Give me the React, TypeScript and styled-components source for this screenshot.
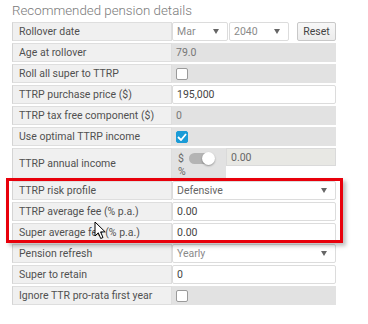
import styled, { createGlobalStyle } from "styled-components";

const Global = createGlobalStyle`
  body {
    margin: 0;
    background: #fff;
    font-family: Roboto, "Liberation Sans", Arial, sans-serif;
  }
`;

const Page = styled.div`
  position: relative;
  width: 368px;
  height: 324px;
  padding: 0 32px 0 12px;
  box-sizing: border-box;
  overflow: hidden;
`;

const Title = styled.h3`
  margin: 0;
  height: 22px;
  font-size: 13.3px;
  font-weight: 300;
  color: #7a7a7a;
  line-height: 21px;
`;

const Form = styled.div`
  display: flex;
  flex-direction: column;
  gap: 2px;
`;

const Row = styled.div<{ $h?: number }>`
  display: grid;
  grid-template-columns: 160px 164px;
  height: ${({ $h }) => $h ?? 19}px;
`;

const Label = styled.div`
  display: flex;
  align-items: center;
  padding-left: 6px;
  background: #f0f0f0;
  border: 1px solid #dedede;
  border-left-color: #d4d4d4;
  box-sizing: border-box;
  font-size: 10.5px;
  color: #505050;
  white-space: nowrap;
  overflow: hidden;
`;

const ReadOnly = styled.div`
  display: flex;
  align-items: center;
  padding-left: 4px;
  background: #e2e2e2;
  font-size: 10.5px;
  color: #777;
`;

const Input = styled.div`
  display: flex;
  align-items: center;
  padding-left: 4px;
  background: #fff;
  border: 1px solid #dcdcdc;
  border-radius: 2px;
  box-sizing: border-box;
  font-size: 10.5px;
  color: #444;
`;

const Select = styled(Input)<{ $muted?: boolean }>`
  justify-content: space-between;
  padding-right: 8px;
  color: ${({ $muted }) => ($muted ? "#8a8a8a" : "#666")};
  &::after {
    content: "";
    border-left: 3.5px solid transparent;
    border-right: 3.5px solid transparent;
    border-top: 5px solid #666;
  }
`;

const DateCell = styled.div`
  display: grid;
  grid-template-columns: 56px 60px 1fr;
  gap: 1px;
`;

const ResetButton = styled.button`
  margin-left: 7px;
  padding: 0;
  height: 19px;
  background: linear-gradient(#f8f8f8, #ececec);
  border: 1px solid #c8c8c8;
  border-radius: 2px;
  font-family: inherit;
  font-size: 10.5px;
  color: #444;
`;

const CheckCell = styled(ReadOnly)`
  padding-left: 4px;
`;

const Box = styled.span<{ $checked?: boolean }>`
  display: flex;
  align-items: center;
  justify-content: center;
  width: 12px;
  height: 12px;
  box-sizing: border-box;
  border-radius: 2px;
  background: ${({ $checked }) => ($checked ? "#1a9bd7" : "#fff")};
  border: 1px solid ${({ $checked }) => ($checked ? "#1a9bd7" : "#9a9a9a")};
`;

const IncomeCell = styled.div`
  display: grid;
  grid-template-columns: 54px 1fr;
`;

const ToggleArea = styled.div`
  background: #e2e2e2;
  padding: 4px 0 0 6px;
  font-size: 10.5px;
  color: #666;
  display: grid;
  grid-template-columns: 10px auto;
  row-gap: 0;
  align-items: center;
  align-content: start;
`;

const Track = styled.span`
  position: relative;
  width: 25px;
  height: 11px;
  border-radius: 6px;
  background: #b4b4b4;
  margin-left: 1px;
`;

const Knob = styled.span`
  position: absolute;
  right: -1px;
  top: -1px;
  width: 13px;
  height: 13px;
  border-radius: 50%;
  background: #fff;
  box-shadow: 0 1px 2px rgba(0, 0, 0, 0.35);
`;

const IncomeValue = styled.div`
  align-self: start;
  height: 18px;
  display: flex;
  align-items: center;
  padding-left: 4px;
  background: #e8e8e4;
  border: 1px solid #dadada;
  box-sizing: border-box;
  font-size: 10.5px;
  color: #666;
`;

const Highlight = styled.div`
  position: absolute;
  left: 6px;
  top: 178px;
  width: 337px;
  height: 65px;
  box-sizing: border-box;
  border: 3px solid #e8000b;
  box-shadow: 3px 3px 4px rgba(0, 0, 0, 0.25);
  pointer-events: none;
`;

const Cursor = styled.svg`
  position: absolute;
  left: 94px;
  top: 221px;
`;

function Tick() {
  return (
    <svg width="10" height="8" viewBox="0 0 10 8">
      <path d="M1 4l3 3 5-6" fill="none" stroke="#fff" strokeWidth="1.8" />
    </svg>
  );
}

export default function App() {
  return (
    <Page>
      <Global />
      <Title>Recommended pension details</Title>
      <Form>
        <Row>
          <Label>Rollover date</Label>
          <DateCell>
            <Select $muted>Mar</Select>
            <Select $muted>2040</Select>
            <ResetButton>Reset</ResetButton>
          </DateCell>
        </Row>
        <Row>
          <Label>Age at rollover</Label>
          <ReadOnly>79.0</ReadOnly>
        </Row>
        <Row>
          <Label>Roll all super to TTRP</Label>
          <CheckCell>
            <Box />
          </CheckCell>
        </Row>
        <Row>
          <Label>TTRP purchase price ($)</Label>
          <Input>195,000</Input>
        </Row>
        <Row>
          <Label>TTRP tax free component ($)</Label>
          <ReadOnly>0</ReadOnly>
        </Row>
        <Row>
          <Label>Use optimal TTRP income</Label>
          <CheckCell>
            <Box $checked>
              <Tick />
            </Box>
          </CheckCell>
        </Row>
        <Row $h={31}>
          <Label>TTRP annual income</Label>
          <IncomeCell>
            <ToggleArea>
              <span>$</span>
              <Track>
                <Knob />
              </Track>
              <span>%</span>
            </ToggleArea>
            <IncomeValue>0.00</IncomeValue>
          </IncomeCell>
        </Row>
        <Row>
          <Label>TTRP risk profile</Label>
          <Select>Defensive</Select>
        </Row>
        <Row>
          <Label>TTRP average fee (% p.a.)</Label>
          <Input>0.00</Input>
        </Row>
        <Row>
          <Label>Super average fee (% p.a.)</Label>
          <Input>0.00</Input>
        </Row>
        <Row>
          <Label>Pension refresh</Label>
          <Select $muted>Yearly</Select>
        </Row>
        <Row>
          <Label>Super to retain</Label>
          <Input>0</Input>
        </Row>
        <Row>
          <Label>Ignore TTR pro-rata first year</Label>
          <CheckCell>
            <Box />
          </CheckCell>
        </Row>
      </Form>
      <Highlight />
      <Cursor width="13" height="19" viewBox="0 0 13 19">
        <path
          d="M1 1v14l3.3-3.2 2.4 5.7 2.3-1-2.4-5.6h4.6z"
          fill="#fff"
          stroke="#000"
          strokeWidth="1"
          strokeLinejoin="round"
        />
      </Cursor>
    </Page>
  );
}
